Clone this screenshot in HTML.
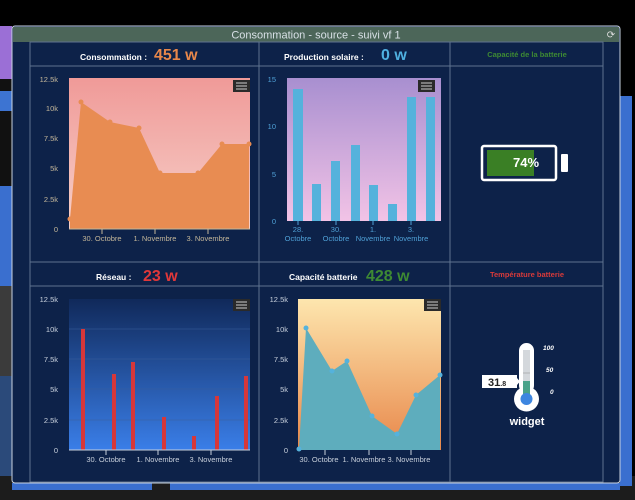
<!DOCTYPE html>
<html><head><meta charset="utf-8"><style>
html,body{margin:0;padding:0;background:#000;width:635px;height:500px;overflow:hidden}
svg{display:block;font-family:"Liberation Sans",sans-serif}
</style></head><body>
<svg width="635" height="500" viewBox="0 0 635 500" xmlns="http://www.w3.org/2000/svg">
<defs>
<linearGradient id="g1" x1="0" y1="0" x2="0" y2="1"><stop offset="0" stop-color="#f09a98"/><stop offset="1" stop-color="#f6cfc8"/></linearGradient>
<linearGradient id="g2" x1="0" y1="0" x2="0" y2="1"><stop offset="0" stop-color="#a88fd0"/><stop offset="1" stop-color="#f2c3e6"/></linearGradient>
<linearGradient id="g3" x1="0" y1="0" x2="0" y2="1"><stop offset="0" stop-color="#10295a"/><stop offset="1" stop-color="#3a7ee8"/></linearGradient>
<linearGradient id="g4" x1="0" y1="0" x2="0" y2="1"><stop offset="0" stop-color="#fde6ae"/><stop offset="1" stop-color="#e8874a"/></linearGradient>
</defs>
<rect x="0" y="26" width="12" height="53" fill="#9b6fd6"/>
<rect x="0" y="79" width="12" height="12" fill="#111"/>
<rect x="0" y="91" width="12" height="20" fill="#3d74d2"/>
<rect x="0" y="111" width="12" height="75" fill="#111"/>
<rect x="0" y="186" width="12" height="100" fill="#3a6fcf"/>
<rect x="0" y="286" width="12" height="90" fill="#3b3b3b"/>
<rect x="0" y="376" width="12" height="100" fill="#2b4a7a"/>
<rect x="0" y="476" width="635" height="24" fill="#1c1c1c"/>
<rect x="12" y="483" width="140" height="7" fill="#3a6fcf"/>
<rect x="170" y="483" width="450" height="7" fill="#3a6fcf"/>
<rect x="620" y="96" width="12" height="390" fill="#3a6fcf"/>
<rect x="12" y="26" width="608" height="457" rx="3" fill="#0d2249" stroke="#c9d3e0" stroke-width="1"/>
<rect x="13" y="27" width="606" height="15" fill="#4c6659"/>
<text x="316" y="38.5" font-size="11" fill="#d8e0e6" text-anchor="middle">Consommation - source - suivi vf 1</text>
<text x="611" y="38" font-size="10" fill="#ddd" text-anchor="middle">⟳</text>
<g stroke="#5f7390" stroke-width="1" fill="none">
<rect x="30" y="42" width="573" height="440"/>
<line x1="259" y1="42" x2="259" y2="482"/>
<line x1="450" y1="42" x2="450" y2="482"/>
<line x1="30" y1="66" x2="603" y2="66"/>
<line x1="30" y1="262" x2="603" y2="262"/>
<line x1="30" y1="286" x2="603" y2="286"/>
</g>
<text x="80" y="60" font-size="8.5" font-weight="bold" fill="#fff">Consommation :</text>
<text x="154" y="60" font-size="16" font-weight="bold" fill="#e8874a">451 w</text>
<text x="284" y="60" font-size="8.5" font-weight="bold" fill="#fff">Production solaire :</text>
<text x="381" y="60" font-size="16" font-weight="bold" fill="#4fb0e0">0 w</text>
<text x="527" y="57" font-size="7.5" font-weight="bold" fill="#3e8a33" text-anchor="middle">Capacité de la batterie</text>
<text x="96" y="280" font-size="8.5" font-weight="bold" fill="#fff">Réseau :</text>
<text x="143" y="281" font-size="16" font-weight="bold" fill="#e0383a">23 w</text>
<text x="289" y="280" font-size="8.5" font-weight="bold" fill="#fff">Capacité batterie</text>
<text x="366" y="281" font-size="16" font-weight="bold" fill="#3e8a33">428 w</text>
<text x="527" y="277" font-size="7.5" font-weight="bold" fill="#d83a3a" text-anchor="middle">Température batterie</text>
<g font-size="7.5" fill="#c4b79a" text-anchor="end">
<text x="58" y="82">12.5k</text><text x="58" y="111">10k</text><text x="58" y="141">7.5k</text><text x="58" y="171">5k</text><text x="58" y="202">2.5k</text><text x="58" y="232">0</text>
</g>
<rect x="69" y="78" width="181" height="151" fill="url(#g1)"/>
<path d="M70,219 L81,102 L110,122 L139,128 L160,173 L198,173 L222,144 L249,144 L249,229 L70,229 Z" fill="#e88c52"/>
<g fill="#e88c52"><circle cx="70" cy="219" r="2.5"/><circle cx="81" cy="102" r="2.5"/><circle cx="110" cy="122" r="2.5"/><circle cx="139" cy="128" r="2.5"/><circle cx="160" cy="173" r="2.5"/><circle cx="198" cy="173" r="2.5"/><circle cx="222" cy="144" r="2.5"/><circle cx="249" cy="144" r="2.5"/></g>
<line x1="69" y1="229" x2="250" y2="229" stroke="#c4b79a"/>
<path d="M102,229v5M155,229v5M208,229v5" stroke="#c4b79a"/>
<g font-size="7.5" fill="#c4b79a" text-anchor="middle"><text x="102" y="241">30. Octobre</text><text x="155" y="241">1. Novembre</text><text x="208" y="241">3. Novembre</text></g>
<g font-size="7.5" fill="#4fa0d6" text-anchor="end">
<text x="276" y="82">15</text><text x="276" y="129">10</text><text x="276" y="177">5</text><text x="276" y="224">0</text>
</g>
<rect x="287" y="78" width="154" height="143" fill="url(#g2)"/>
<g fill="#55b2dc">
<rect x="293" y="89" width="10" height="132"/><rect x="312" y="184" width="9" height="37"/><rect x="331" y="161" width="9" height="60"/><rect x="351" y="145" width="9" height="76"/><rect x="369" y="185" width="9" height="36"/><rect x="388" y="204" width="9" height="17"/><rect x="407" y="97" width="9" height="124"/><rect x="426" y="97" width="9" height="124"/>
</g>
<path d="M298,221v4M336,221v4M373,221v4M411,221v4" stroke="#4fa0d6"/>
<g font-size="7.5" fill="#4fa0d6" text-anchor="middle"><text x="298" y="232">28.</text><text x="298" y="241">Octobre</text><text x="336" y="232">30.</text><text x="336" y="241">Octobre</text><text x="373" y="232">1.</text><text x="373" y="241">Novembre</text><text x="411" y="232">3.</text><text x="411" y="241">Novembre</text></g>
<rect x="482" y="146" width="74" height="34" rx="2" fill="#0d2249" stroke="#fff" stroke-width="2.5"/>
<rect x="487" y="150" width="47" height="26" fill="#3a7f25"/>
<rect x="561" y="154" width="7" height="18" rx="1" fill="#fff"/>
<text x="526" y="167" font-size="13" font-weight="bold" fill="#fff" text-anchor="middle">74%</text>
<g font-size="7.5" fill="#c8d0dc" text-anchor="end">
<text x="58" y="302">12.5k</text><text x="58" y="332">10k</text><text x="58" y="362">7.5k</text><text x="58" y="392">5k</text><text x="58" y="423">2.5k</text><text x="58" y="453">0</text>
</g>
<rect x="69" y="299" width="181" height="151" fill="url(#g3)"/>
<g stroke="#3a5f9a" stroke-width="0.5"><path d="M69,329h181M69,359h181M69,389h181M69,420h181"/></g>
<g fill="#d6373a">
<rect x="81" y="329" width="4" height="121"/><rect x="112" y="374" width="4" height="76"/><rect x="131" y="362" width="4" height="88"/><rect x="162" y="417" width="4" height="33"/><rect x="192" y="436" width="4" height="14"/><rect x="215" y="396" width="4" height="54"/><rect x="244" y="376" width="4" height="74"/>
</g>
<line x1="69" y1="450" x2="250" y2="450" stroke="#c8d0dc"/>
<path d="M106,450v5M158,450v5M211,450v5" stroke="#c8d0dc"/>
<g font-size="7.5" fill="#c8d0dc" text-anchor="middle"><text x="106" y="462">30. Octobre</text><text x="158" y="462">1. Novembre</text><text x="211" y="462">3. Novembre</text></g>
<g font-size="7.5" fill="#c8d0dc" text-anchor="end">
<text x="288" y="302">12.5k</text><text x="288" y="332">10k</text><text x="288" y="362">7.5k</text><text x="288" y="392">5k</text><text x="288" y="423">2.5k</text><text x="288" y="453">0</text>
</g>
<rect x="298" y="299" width="143" height="151" fill="url(#g4)"/>
<path d="M299,449 L306,328 L332,371 L347,361 L372,416 L397,434 L416,395 L440,375 L440,450 L299,450 Z" fill="#5eadbd"/>
<g fill="#55b2dc"><circle cx="299" cy="449" r="2.5"/><circle cx="306" cy="328" r="2.5"/><circle cx="332" cy="371" r="2.5"/><circle cx="347" cy="361" r="2.5"/><circle cx="372" cy="416" r="2.5"/><circle cx="397" cy="434" r="2.5"/><circle cx="416" cy="395" r="2.5"/><circle cx="440" cy="375" r="2.5"/></g>
<path d="M325,450v5M369,450v5M411,450v5" stroke="#c8d0dc"/>
<g font-size="7.5" fill="#c8d0dc" text-anchor="middle"><text x="319" y="462">30. Octobre</text><text x="364" y="462">1. Novembre</text><text x="409" y="462">3. Novembre</text></g>
<g>
<rect x="233" y="80" width="17" height="12" fill="#2a2a2a"/><rect x="418" y="80" width="17" height="12" fill="#2a2a2a"/><rect x="233" y="299" width="17" height="12" fill="#2a2a2a"/><rect x="424" y="299" width="17" height="12" fill="#2a2a2a"/>
<g stroke="#ccc" stroke-width="1"><path d="M236,83h11M236,86h11M236,89h11M421,83h11M421,86h11M421,89h11M236,302h11M236,305h11M236,308h11M427,302h11M427,305h11M427,308h11"/></g>
</g>
<rect x="519" y="343" width="15" height="50" rx="7.5" fill="#fff"/>
<circle cx="526.5" cy="399" r="12.5" fill="#fff"/>
<rect x="523" y="350" width="7" height="45" fill="#d4d8dc"/>
<rect x="523" y="381" width="7" height="14" fill="#4aa38a"/>
<circle cx="526.5" cy="399" r="6" fill="#3d86e0"/>
<line x1="523" y1="373" x2="530" y2="373" stroke="#999" stroke-width="0.6"/>
<g font-size="6.5" font-style="italic" font-weight="bold" fill="#fff"><text x="543" y="350">100</text><text x="546" y="372">50</text><text x="550" y="394">0</text></g>
<rect x="482" y="375" width="35" height="13" fill="#fff"/>
<path d="M517,378 L520,381.5 L517,385 Z" fill="#fff"/>
<text x="488" y="386" font-size="11" font-weight="bold" fill="#222">31<tspan font-size="7">.8</tspan></text>
<text x="527" y="425" font-size="11" font-weight="bold" fill="#fff" text-anchor="middle">widget</text>
</svg>
</body></html>
